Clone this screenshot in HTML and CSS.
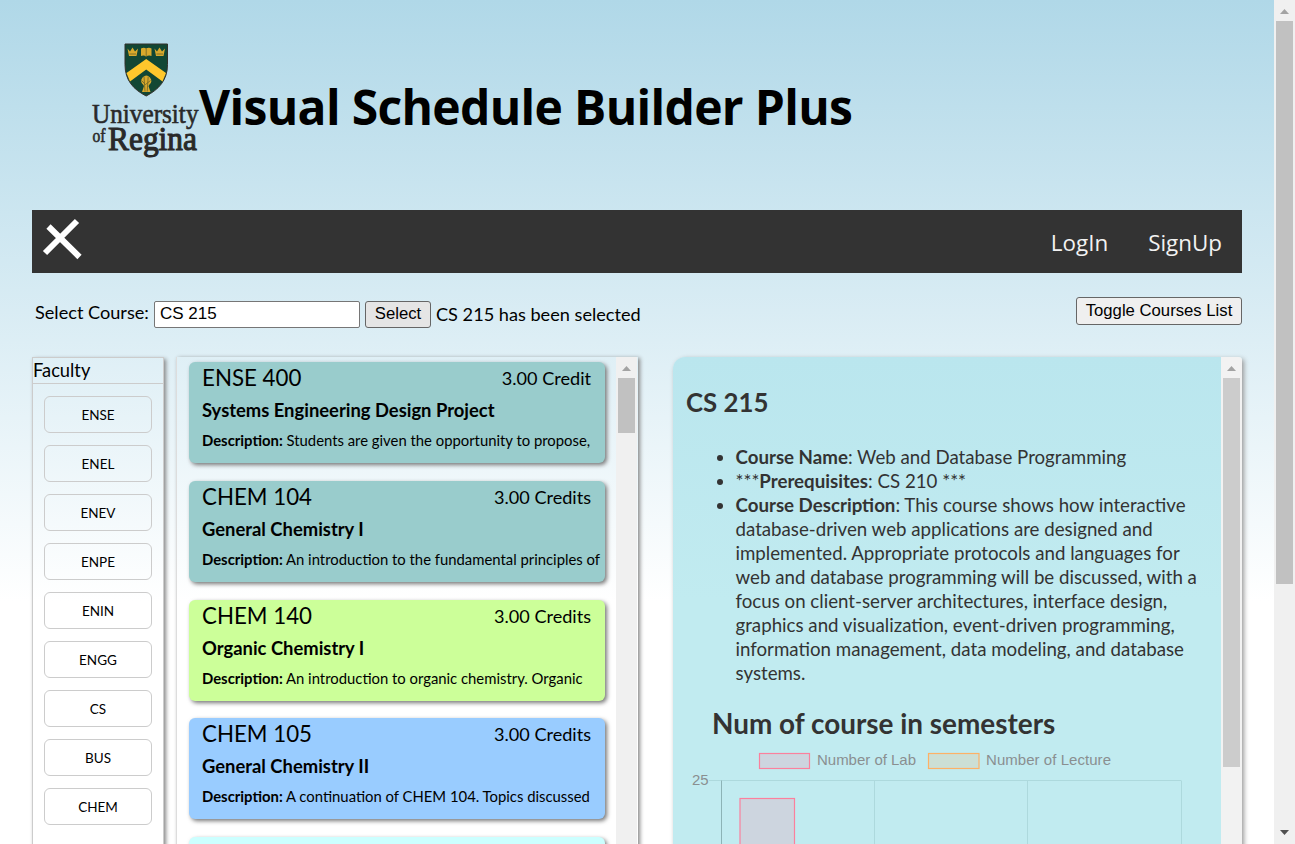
FILE: index.html
```html
<!DOCTYPE html>
<html lang="en">
<head>
<meta charset="utf-8">
<title>Visual Schedule Builder Plus</title>
<link rel="stylesheet" href="styles.css">
</head>
<body>
<div class="page">
<header class="header">
<svg class="logo" viewBox="0 0 110 120" width="110" height="120" role="img" aria-label="University of Regina">
<g transform="translate(1.500 1.500)">
<path d="M33.500 2.500H76V23C76 39 67 48 54.700 54.500C42 48 33.500 39 33.500 23Z" fill="#124734" stroke="#33302b"/>
<path d="M54.700 17.500L74.500 31.500L71 40L54.700 28L38.500 40L35 31.500Z" fill="#ffc72c"/>
<path d="M36 7l2.500 3L41 6l2.500 4L46.500 7l-1.500 7.500h-7.500zM63 7l2.500 3L68 6l2.500 4L73.500 7l-1.500 7.500h-7.500zM49.500 7q3-1.500 5 0q3-1.500 5.500 0v7.500q-3-1-5.500 .5q-2-1.500-5-.5zM51 36q4-4 7.500 0q3 4-.5 7l-1 1.500l2 6h-8.500l2-6l-1-1.500q-3.500-3-.5-7z" fill="#d9a92c"/>
<path d="M54.700 7v8M52.500 35l1 15M56.700 35l-1 15M50 39l4 4l5-4M38 12.500h6.500M65 12.500h6.500" stroke="#6d6426" stroke-width=".8" fill="none"/>
</g>
<g class="logo-text"><text x="2" y="82.500" font-size="28" textLength="106.500" lengthAdjust="spacingAndGlyphs">University</text><text x="2.500" y="102" font-size="18" textLength="13" lengthAdjust="spacingAndGlyphs">of</text><text class="regina" x="18" y="109.500" font-size="34" textLength="89" lengthAdjust="spacingAndGlyphs">Regina</text></g>
</svg>
<h1 class="title">Visual Schedule Builder Plus</h1>
</header>
<nav class="nav">
<svg class="close" width="44" height="44" viewBox="0 0 44 44"><path d="M9.500 10.500L40.500 41M38 5L6 37" stroke="#fff" stroke-width="6" fill="none"/></svg>
<div class="links"><a>LogIn</a><a>SignUp</a></div>
</nav>
<div class="toolbar">
<label class="label">Select Course:</label><input class="field" value="CS 215"><button class="btn select">Select</button><span class="status">CS 215 has been selected</span><button class="btn toggle">Toggle Courses List</button>
</div>
<main class="main">
<section class="faculty">
<div class="faculty-head">Faculty</div>
<div class="faculty-list"><button>ENSE</button><button>ENEL</button><button>ENEV</button><button>ENPE</button><button>ENIN</button><button>ENGG</button><button>CS</button><button>BUS</button><button>CHEM</button></div>
</section>
<section class="courses">
<div class="course-list">
<article class="card teal"><div class="top"><span class="code">ENSE 400</span><span class="credit">3.00 Credit</span></div><div class="name">Systems Engineering Design Project</div><p class="desc"><b>Description:</b> Students are given the opportunity to propose,</p></article>
<article class="card teal"><div class="top"><span class="code">CHEM 104</span><span class="credit">3.00 Credits</span></div><div class="name">General Chemistry I</div><p class="desc"><b>Description:</b> An introduction to the fundamental principles of</p></article>
<article class="card green"><div class="top"><span class="code">CHEM 140</span><span class="credit">3.00 Credits</span></div><div class="name">Organic Chemistry I</div><p class="desc"><b>Description:</b> An introduction to organic chemistry. Organic</p></article>
<article class="card blue"><div class="top"><span class="code">CHEM 105</span><span class="credit">3.00 Credits</span></div><div class="name">General Chemistry II</div><p class="desc"><b>Description:</b> A continuation of CHEM 104. Topics discussed</p></article>
<article class="card cyan"></article>
</div>
<div class="scroll"><i class="up"></i><div class="thumb t1"></div></div>
</section>
<section class="detail">
<div class="detail-body">
<h2 class="detail-title">CS 215</h2>
<ul class="facts">
<li><b>Course Name</b>: Web and Database Programming</li>
<li>***<b>Prerequisites</b>: CS 210 ***</li>
<li><b>Course Description</b>: This course shows how interactive<br>database-driven web applications are designed and<br>implemented. Appropriate protocols and languages for<br>web and database programming will be discussed, with a<br>focus on client-server architectures, interface design,<br>graphics and visualization, event-driven programming,<br>information management, data modeling, and database<br>systems.</li>
</ul>
<h2 class="chart-title">Num of course in semesters</h2>
<svg class="chart" width="547" height="110" viewBox="0 0 547 110">
<g fill="none" stroke="#add9dd"><path d="M36 36.500H508M201.500 36.500V110M354.500 36.500V110M508.500 36.500V110"/><path d="M48.500 36.500V110" stroke="#8cb3b6"/></g>
<g fill="#cdd5df" stroke="#fb809d" stroke-width="1.200"><rect x="86.500" y="9.500" width="50" height="15"/><rect x="67" y="54.500" width="54.500" height="100"/></g>
<rect x="255.500" y="9.500" width="50.500" height="15" fill="#ccdfd5" stroke="#fdb166" stroke-width="1.200"/>
<g class="chart-text"><text x="144" y="21" textLength="99">Number of Lab</text><text x="313" y="21" textLength="125">Number of Lecture</text><text x="19" y="41">25</text></g>
</svg>
</div>
<div class="scroll faded"><i class="up"></i><div class="thumb t2"></div></div>
</section>
</main>
</div>
<div class="scroll window-scroll"><i class="up"></i><div class="thumb t3"></div><i class="down"></i></div>
</body>
</html>
```
FILE: styles.css
```css
* { box-sizing: border-box; }
body { margin: 0; height: 844px; overflow: hidden; display: flex; font-family: Lato, sans-serif; color: #000; background: linear-gradient(#b0d8e8, #fff 601px); }
.page { width: 1274px; height: 844px; padding: 0 32px; overflow: hidden; }
.header { height: 210px; padding: 40px 0 0 58px; display: flex; }
.logo { overflow: visible; }
.logo-text { font-family: "Liberation Serif", serif; fill: #292929; stroke: #292929; stroke-width: .6px; }
.regina { stroke-width: 1.1px; }
.title { margin: 29px 0 0 -1px; font: 700 48px/76px "Open Sans", sans-serif; letter-spacing: -.67px; white-space: nowrap; }
.nav { height: 63px; padding: 6px 20px 0 7px; background: #333; display: flex; justify-content: space-between; }
.links { display: flex; gap: 40px; font: 22.400px/53px "Open Sans", sans-serif; color: #f2f2f2; }
.toolbar { height: 84px; padding: 24px 0 0 3px; display: flex; align-items: flex-start; font-size: 18.150px; line-height: 30px; white-space: nowrap; }
.label { width: 119px; }
.field { width: 206px; height: 27px; margin: 4px 5px 0 0; padding: 0 5px 2px; border: 1px solid #767676; border-radius: 2px; font: 17px "Liberation Sans", sans-serif; }
.btn { padding: 0; border: 1px solid #666; border-radius: 3px; background: #efefef; font: 16.700px "Liberation Sans", sans-serif; }
.select { width: 66px; height: 27px; margin: 4px 5px 0 0; background: #e5e5e5; padding-bottom: 2px; }
.status { padding-top: 2px; }
.toggle { width: 166px; height: 28px; margin-left: auto; padding-bottom: 1px; }
.main { display: flex; height: 700px; }
.faculty { width: 132px; margin-right: 12px; border: 1px solid #ccc; box-shadow: 2px 2px 4px #888; }
.faculty-head { height: 26px; border-bottom: 1px solid #ccc; font-size: 18.300px; line-height: 25px; }
.faculty-list { padding: 12px 11px; display: grid; gap: 12px; }
.faculty-list button { height: 37px; padding: 1px 0 0; border: 1px solid #ccc; border-radius: 6px; background: transparent; font: 13.500px Lato, sans-serif; }
.courses { width: 462px; margin-right: 35px; padding-right: 1px; display: flex; border-left: 1px solid #ddd; box-shadow: 2px 1px 4px #888; }
.course-list { flex: 1; min-width: 0; padding: 5px 11px 5px 12px; display: grid; grid-template-columns: minmax(0, 1fr); gap: 17.750px; align-content: start; }
.card { height: 101px; padding: 0 14px 0 13px; border-radius: 6px; box-shadow: 2px 2px 4px #777; white-space: nowrap; }
.teal { background: #9cc; }
.green { background: #cf9; }
.blue { background: #9cf; }
.cyan { background: #cff; }
.top { height: 34px; display: flex; justify-content: space-between; line-height: 32px; }
.code { font-size: 22.300px; }
.credit { font-size: 18.100px; }
.name { font-size: 18.400px; font-weight: 700; line-height: 28px; }
.desc { margin: 2px 0 0; font-size: 14.850px; line-height: 29px; }
.detail { width: 569px; display: flex; border-radius: 12px 3px 0 0; background: linear-gradient(#bae6ee, #c1ebf0 244px); box-shadow: 2px 2px 5px #999; color: #333; overflow: hidden; }
.detail-body { width: 548px; }
.detail-title { margin: 28px 0 0 13px; font-size: 25.800px; line-height: 34px; }
.facts { margin: 26px 0 0; padding-left: 62.500px; font-size: 18.700px; line-height: 24px; white-space: nowrap; }
.chart-title { margin: 20px 0 0 39px; font-size: 27.900px; line-height: 36px; }
.chart { display: block; margin-top: 3px; }
.chart-text { font: 15px "Liberation Sans", sans-serif; fill: #8a8f90; }
.scroll { width: 21px; flex: none; background: #f0f0f0; display: flex; flex-direction: column; align-items: center; }
.up { width: 9px; height: 5px; margin: 9px 0 7px; background: #a3a3a3; clip-path: polygon(50% 0, 100% 100%, 0 100%); }
.down { width: 9px; height: 5px; margin: auto 0 9px; background: #505050; clip-path: polygon(0 0, 100% 0, 50% 100%); }
.thumb { width: 17px; background: #c1c1c1; }
.t1 { height: 55px; }
.t2 { height: 389px; background: #ccc; }
.t3 { height: 563px; }
.faded { background: #f2f2f2; }
```
